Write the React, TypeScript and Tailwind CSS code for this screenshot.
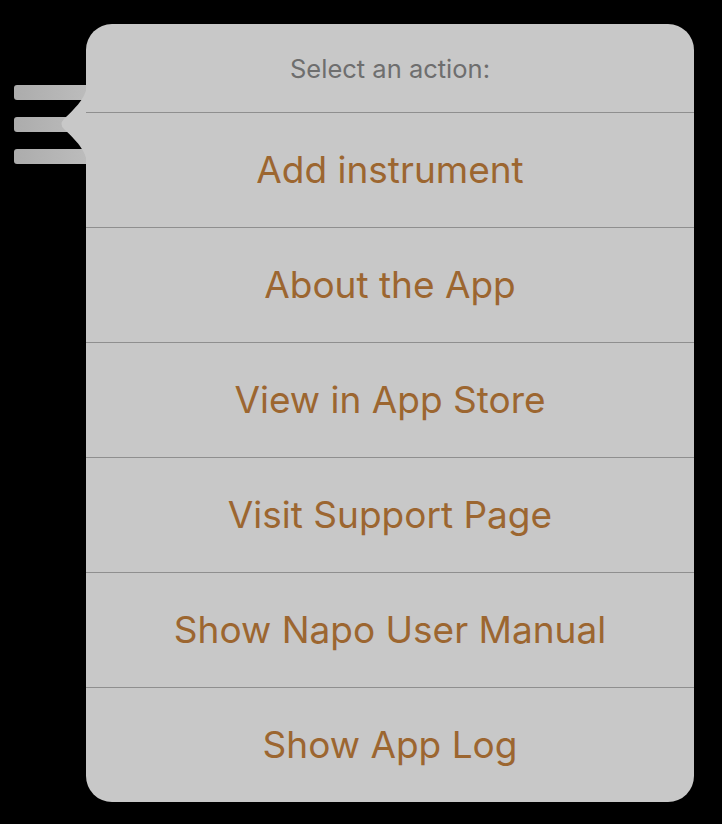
import React from 'react';

const actions: string[] = [
  'Add instrument',
  'About the App',
  'View in App Store',
  'Visit Support Page',
  'Show Napo User Manual',
  'Show App Log',
];

const App: React.FC = () => {
  return (
    <div
      className="relative w-[722px] h-[824px] bg-black overflow-hidden"
      style={{ fontFamily: 'Inter, "Noto Sans", sans-serif' }}
    >
      {/* hamburger button behind the popover */}
      <div className="flex flex-col gap-[17px] pt-[85px] pl-[14px]">
        <div className="w-[90px] h-[15px] rounded-[3px] bg-gradient-to-r from-[#acacac] to-[#c0c0c0]" />
        <div className="w-[90px] h-[15px] rounded-[3px] bg-gradient-to-r from-[#acacac] to-[#c0c0c0]" />
        <div className="w-[90px] h-[15px] rounded-[3px] bg-gradient-to-r from-[#acacac] to-[#c0c0c0]" />
      </div>

      {/* popover arrow */}
      <svg className="absolute left-0 top-0" width="100" height="200" viewBox="0 0 100 200">
        <path
          d="M88,82 C86,96 80,104 64,119 Q59,124 64,129 C80,144 86,152 88,166 Z"
          fill="#c8c8c8"
        />
      </svg>

      {/* popover */}
      <div className="absolute left-[86px] top-[24px] w-[608px] h-[778px] rounded-[26px] bg-[#c8c8c8] flex flex-col overflow-hidden">
        <div className="h-[89px] flex items-center justify-center text-[25.5px] text-[#6e6e6e] pt-[3px] border-b border-[#8f8f8f]">
          Select an action:
        </div>
        {actions.map((label, i) => (
          <div
            key={label}
            className={
              i < actions.length - 1
                ? 'h-[115px] flex items-center justify-center text-[37px] text-[#9c6630] border-b border-[#8f8f8f]'
                : 'flex-1 flex items-center justify-center text-[37px] text-[#9c6630]'
            }
          >
            {label}
          </div>
        ))}
      </div>
    </div>
  );
};

export default App;
